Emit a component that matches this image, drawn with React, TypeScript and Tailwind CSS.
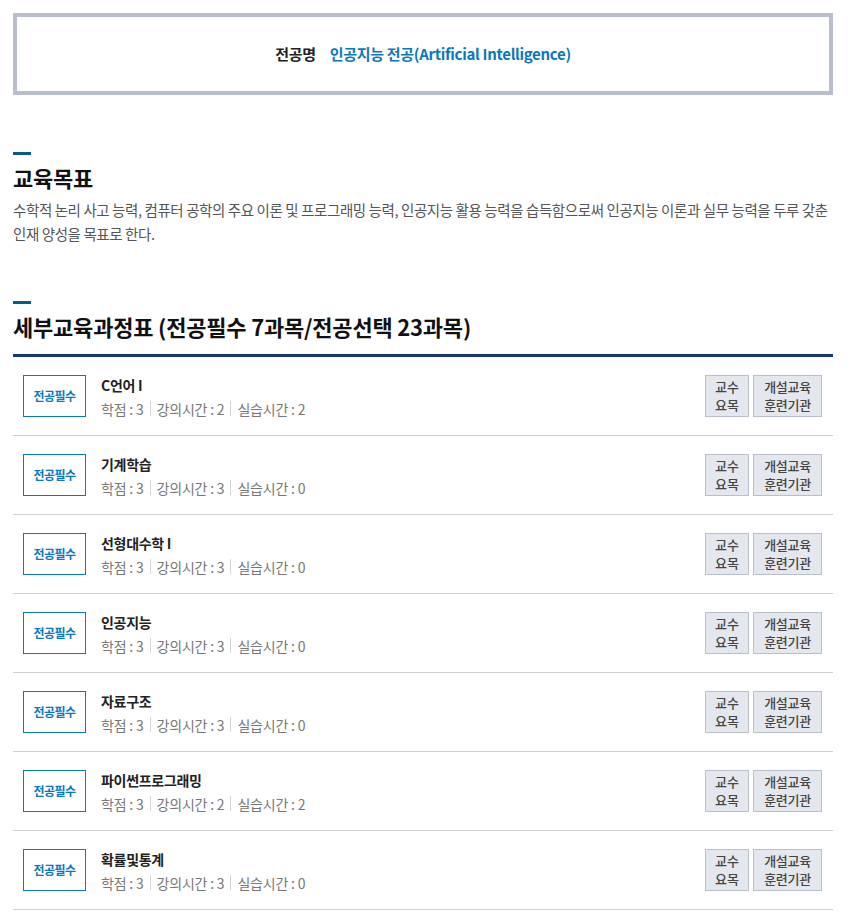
import React from "react";

interface Course {
  name: string;
  credit: number;
  lecture: number;
  practice: number;
}

const courses: Course[] = [
  { name: "C언어 I", credit: 3, lecture: 2, practice: 2 },
  { name: "기계학습", credit: 3, lecture: 3, practice: 0 },
  { name: "선형대수학 I", credit: 3, lecture: 3, practice: 0 },
  { name: "인공지능", credit: 3, lecture: 3, practice: 0 },
  { name: "자료구조", credit: 3, lecture: 3, practice: 0 },
  { name: "파이썬프로그래밍", credit: 3, lecture: 2, practice: 2 },
  { name: "확률및통계", credit: 3, lecture: 3, practice: 0 },
];

const SectionTitle = ({ children }: { children: React.ReactNode }) => (
  <div>
    <div className="w-[18px] h-[3px] bg-[#0b5a8c]" />
    <h2 className="mt-[7px] text-[22px] font-bold leading-[30px] text-[#111] tracking-[-0.2px]">
      {children}
    </h2>
  </div>
);

const App = () => {
  return (
    <div
      className="pl-[13px] pr-[18px] pt-[13px] pb-4 bg-white"
      style={{ fontFamily: '"Noto Sans CJK KR", "Noto Sans", sans-serif' }}
    >
      <div className="h-[82px] border-4 border-[#b8bfcb] flex items-center justify-center text-[15px] tracking-[-0.3px]">
        <span className="font-bold text-[#222]">전공명</span>
        <span className="ml-[14px] font-semibold text-[#0a78c0]">
          인공지능 전공(Artificial Intelligence)
        </span>
      </div>

      <div className="mt-[57px]">
        <SectionTitle>교육목표</SectionTitle>
        <p className="mt-[6px] text-[14.5px] leading-[24px] text-[#555] tracking-[-0.4px]">
          수학적 논리 사고 능력, 컴퓨터 공학의 주요 이론 및 프로그래밍 능력,
          인공지능 활용 능력을 습득함으로써 인공지능 이론과 실무 능력을 두루
          갖춘 인재 양성을 목표로 한다.
        </p>
      </div>

      <div className="mt-[55px]">
        <SectionTitle>세부교육과정표 (전공필수 7과목/전공선택 23과목)</SectionTitle>
        <div className="mt-[13px] border-t-[3px] border-[#163a68]">
          {courses.map((c) => (
            <div
              key={c.name}
              className="h-[79px] border-b border-[#cfcfcf] flex items-center pl-[10px] pr-[11px]"
            >
              <div className="w-[63px] h-[42px] border border-[#0a78c0] flex items-center justify-center text-[12px] font-bold text-[#0a78c0] tracking-[-0.5px]">
                전공필수
              </div>
              <div className="ml-[15px] flex-1">
                <div className="text-[14px] font-bold text-[#222] leading-[20px] tracking-[-0.3px]">
                  {c.name}
                </div>
                <div className="mt-[5px] flex items-center text-[14px] text-[#777] leading-[18px] tracking-[-0.2px]">
                  <span>학점 : {c.credit}</span>
                  <span className="mx-[6px] w-px h-[15px] bg-[#d4d4d4]" />
                  <span>강의시간 : {c.lecture}</span>
                  <span className="mx-[6px] w-px h-[15px] bg-[#d4d4d4]" />
                  <span>실습시간 : {c.practice}</span>
                </div>
              </div>
              <div className="flex gap-[4px]">
                <button className="w-[44px] h-[42px] bg-[#e4e7ed] border border-[#b9bfc9] text-[13px] font-medium leading-[18px] text-[#444] flex flex-col items-center justify-center">
                  <span>교수</span>
                  <span>요목</span>
                </button>
                <button className="w-[69px] h-[42px] bg-[#e4e7ed] border border-[#b9bfc9] text-[13px] font-medium leading-[18px] text-[#444] flex flex-col items-center justify-center tracking-[-0.3px]">
                  <span>개설교육</span>
                  <span>훈련기관</span>
                </button>
              </div>
            </div>
          ))}
        </div>
      </div>
    </div>
  );
};

export default App;
